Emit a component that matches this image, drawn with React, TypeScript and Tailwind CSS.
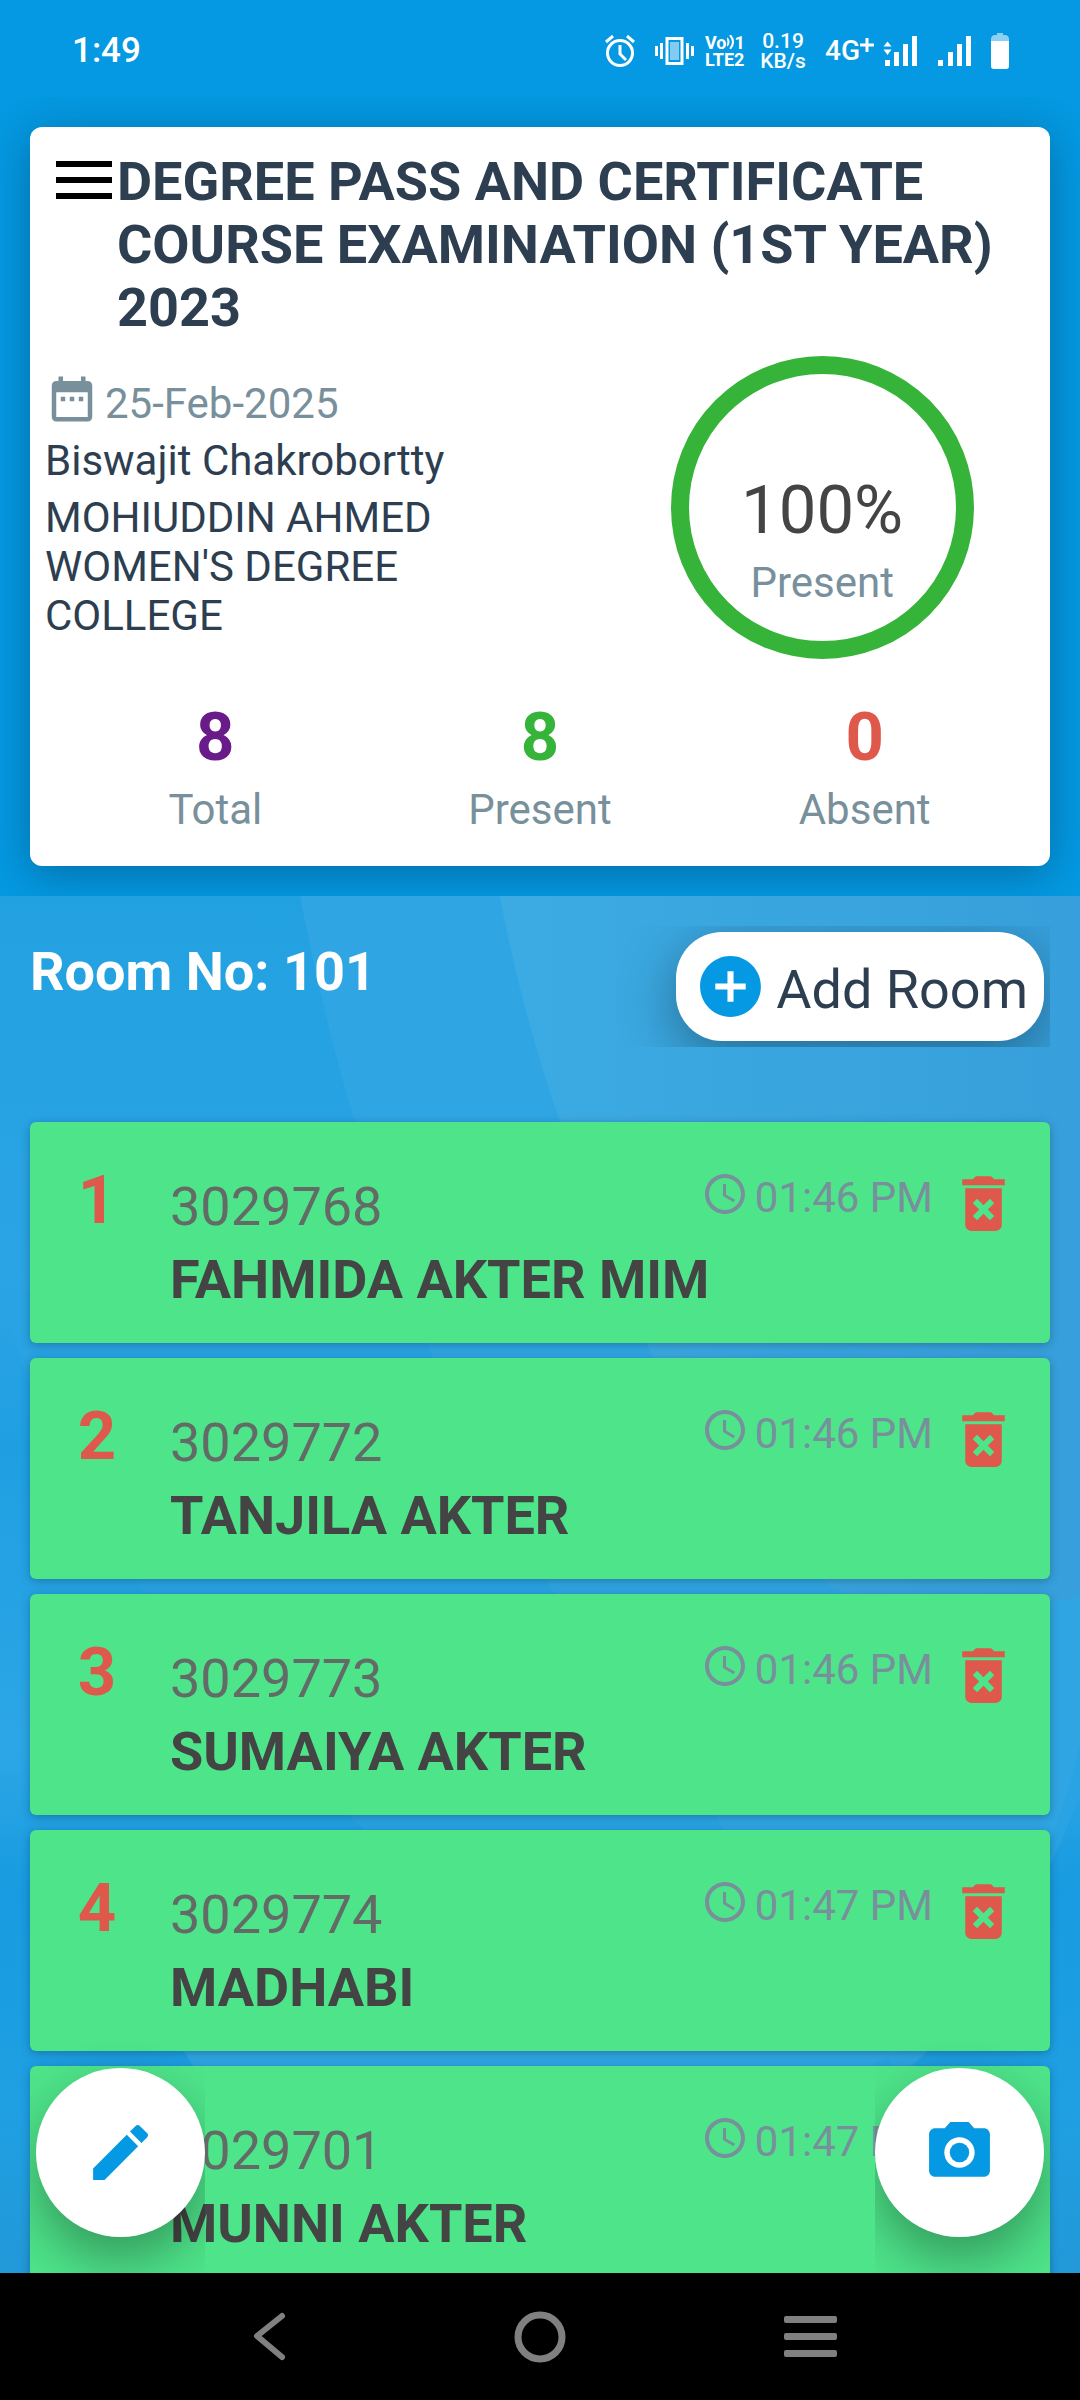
import React, { useState } from 'react';
import {
  MdAccessTime,
  MdAddCircle,
  MdDateRange,
  MdDeleteForever,
  MdEdit,
  MdPhotoCamera,
} from 'react-icons/md';

interface Examinee {
  roll: string;
  name: string;
  time: string;
}

const initialExaminees: Examinee[] = [
  { roll: '3029768', name: 'FAHMIDA AKTER MIM', time: '01:46 PM' },
  { roll: '3029772', name: 'TANJILA AKTER', time: '01:46 PM' },
  { roll: '3029773', name: 'SUMAIYA AKTER', time: '01:46 PM' },
  { roll: '3029774', name: 'MADHABI', time: '01:47 PM' },
  { roll: '3029701', name: 'MUNNI AKTER', time: '01:47 PM' },
];

const stats = [
  { label: 'Total', value: 8, color: 'text-[#6a1b8a]' },
  { label: 'Present', value: 8, color: 'text-[#35b439]' },
  { label: 'Absent', value: 0, color: 'text-[#de584b]' },
];

const StatusBar: React.FC = () => (
  <div className="h-[97px] shrink-0 flex items-center justify-between pl-[72px] pr-[71px] pt-1 text-white">
    <span className="text-[35px] leading-[42px] font-medium">1:49</span>
    <div className="flex items-center">
      <svg className="w-[30px] h-[32px]" viewBox="0 0 30 32" fill="none" stroke="currentColor">
        <circle cx="15" cy="18" r="12.5" strokeWidth="3" />
        <path d="M15 10v9l6 6" strokeWidth="3" />
        <path d="M1 7l7-6M29 7l-7-6" strokeWidth="3" />
      </svg>
      <svg className="w-[40px] h-[28px] ml-5" viewBox="0 0 40 28" fill="currentColor">
        <rect x="12" y="1.5" width="15" height="25" fill="none" stroke="currentColor" strokeWidth="3" />
        <rect x="15" y="5" width="9" height="18" opacity="0.5" />
        <rect x="0" y="9" width="3" height="10" />
        <rect x="5" y="6" width="3" height="16" />
        <rect x="31" y="6" width="3" height="16" />
        <rect x="36" y="9" width="3" height="10" />
      </svg>
      <div className="ml-[10px] w-[40px] text-[18px] leading-[17px] font-bold">
        <div className="flex items-center">
          Vo
          <svg className="w-[8px] h-[14px]" viewBox="0 0 8 14" fill="none" stroke="currentColor" strokeWidth="2">
            <path d="M0 3q3 4 0 8M3 0q6 7 0 14" />
          </svg>
          1
        </div>
        <div>LTE2</div>
      </div>
      <div className="ml-[15px] w-[46px] text-[21px] leading-5 font-medium text-center">
        <div>0.19</div>
        <div>KB/s</div>
      </div>
      <div className="flex items-center ml-[19px] w-[50px] text-[28px] leading-8 font-medium">
        4G
        <svg className="w-[14px] h-[14px] mb-3 shrink-0" viewBox="0 0 14 14" stroke="currentColor" strokeWidth="3">
          <path d="M7 0v14M0 7h14" />
        </svg>
      </div>
      <svg className="w-[36px] h-[30px] ml-2" viewBox="0 0 36 30" fill="currentColor">
        <path d="M4.500 5.500l4 5h-8zM4.500 19l4-5.500h-8z" />
        <rect x="2" y="24" width="5" height="6" />
        <rect x="11" y="16" width="5" height="14" />
        <rect x="20" y="8" width="5" height="22" />
        <rect x="29" y="0" width="5" height="30" />
      </svg>
      <svg className="w-[34px] h-[30px] ml-[19px]" viewBox="0 0 34 30" fill="currentColor">
        <rect x="0" y="24" width="5" height="6" />
        <rect x="10" y="16" width="5" height="14" />
        <rect x="19" y="8" width="5" height="22" />
        <rect x="28" y="0" width="5" height="30" />
      </svg>
      <svg className="w-[18px] h-[36px] ml-[19px]" viewBox="0 0 18 36" fill="currentColor">
        <path d="M6 0h6v2h3q3 1 3 4v2H0V6q0-3 3-4h3z" opacity="0.55" />
        <path d="M0 8h18v25q0 3-3 3H3q-3 0-3-3z" />
      </svg>
    </div>
  </div>
);

const Wallpaper: React.FC = () => (
  <svg
    className="absolute inset-0 w-full h-full"
    viewBox="0 0 1080 1377"
    preserveAspectRatio="none"
    aria-hidden="true"
  >
    <defs>
      <linearGradient id="base" x1="0" y1="0" x2="0" y2="1">
        <stop offset="0" stopColor="#22a1e1" />
        <stop offset="0.28" stopColor="#2ba4e5" />
        <stop offset="0.4" stopColor="#1f9fe2" />
        <stop offset="0.62" stopColor="#2ca6e6" />
        <stop offset="0.72" stopColor="#189be0" />
        <stop offset="0.88" stopColor="#1fa0e3" />
        <stop offset="1" stopColor="#2298d8" />
      </linearGradient>
      <linearGradient id="glow" x1="0" y1="0" x2="1" y2="0">
        <stop offset="0" stopColor="#3cabe3" />
        <stop offset="1" stopColor="#379fdb" />
      </linearGradient>
    </defs>
    <rect width="1080" height="1377" fill="url(#base)" />
    <path d="M0 400Q60 600 180 740T620 1180L900 1180Q1000 1100 1080 900V300z" fill="#29a3e3" />
    <path d="M300 0Q325 130 355 226T430 454T550 690T900 1180Q1020 1080 1080 850V0z" fill="#2fa5e3" />
    <path d="M500 0Q520 110 560 226T650 454T830 690Q940 740 1080 700V0z" fill="url(#glow)" />
    <path d="M180 1150H900L860 1180H200z" fill="#2fa5e3" />
  </svg>
);

const SummaryCard: React.FC = () => (
  <section className="bg-white rounded-[12px] px-[15px] pb-8 pt-[23px] shadow-[0_8px_44px_rgba(0,20,40,0.32)]">
    <div className="flex items-start gap-[5px] pl-[11px]">
      <button type="button" aria-label="Menu" className="pt-[11px] shrink-0">
        <svg className="w-[56px] h-[38px]" viewBox="0 0 56 38">
          <path d="M0 0h56v6H0zM0 16h56v6H0zM0 32h56v6H0z" />
        </svg>
      </button>
      <h1 className="text-[54px] leading-[63px] font-bold text-[#2c3e50]">
        DEGREE PASS AND CERTIFICATE COURSE EXAMINATION (1ST YEAR) 2023
      </h1>
    </div>

    <div className="flex mt-[17px]">
      <div className="w-[57%] pr-10 pt-4 flex flex-col gap-2 text-[42px] leading-[49px] text-[#2c3e50]">
        <div className="flex items-start gap-[6px] text-[#78909c]">
          <MdDateRange size={54} />
          <span className="pt-[7px]">25-Feb-2025</span>
        </div>
        <p>Biswajit Chakrobortty</p>
        <p>MOHIUDDIN AHMED WOMEN'S DEGREE COLLEGE</p>
      </div>
      <div className="flex-1 flex justify-center">
        <div className="w-[303px] h-[303px] rounded-full border-[18px] border-[#35b439] flex flex-col items-center gap-2 pt-[97px]">
          <span className="text-[67px] leading-[79px] text-[#444]">100%</span>
          <span className="text-[42px] leading-[49px] text-[#78909c]">Present</span>
        </div>
      </div>
    </div>

    <div className="grid grid-cols-3 mt-[39px] px-[8px]">
      {stats.map((stat) => (
        <div key={stat.label} className="flex flex-col items-center gap-2">
          <span className={`text-[67px] leading-[79px] font-bold ${stat.color}`}>
            {stat.value}
          </span>
          <span className="text-[42px] leading-[49px] text-[#78909c]">{stat.label}</span>
        </div>
      ))}
    </div>
  </section>
);

interface ExamineeCardProps {
  index: number;
  examinee: Examinee;
  onDelete: (roll: string) => void;
}

const ExamineeCard: React.FC<ExamineeCardProps> = ({ index, examinee, onDelete }) => (
  <li className="flex items-start bg-[#4ee48a] rounded-[6px] pr-[30px] pb-8 shadow-[0_2px_10px_rgba(0,0,0,0.25)]">
    <span className="w-[134px] shrink-0 pt-[39px] text-center text-[67px] leading-[79px] font-bold text-[#de584b]">
      {index}
    </span>
    <div className="flex-1 min-w-0 pl-[6px] pt-[53px] flex flex-col gap-[10px] text-[54px] leading-[63px]">
      <span className="text-[#636b67]">{examinee.roll}</span>
      <span className="font-bold text-[#444] whitespace-nowrap">{examinee.name}</span>
    </div>
    <div className="shrink-0 flex items-start pt-[45px] text-[#78909c]">
      <MdAccessTime size={48} className="mt-[3px]" />
      <span className="pl-[6px] pr-[14px] pt-[6px] text-[42px] leading-[49px] whitespace-nowrap">
        {examinee.time}
      </span>
      <button
        type="button"
        aria-label={`Delete ${examinee.name}`}
        onClick={() => onDelete(examinee.roll)}
        className="text-[#de584b]"
      >
        <MdDeleteForever size={73} />
      </button>
    </div>
  </li>
);

const NavBar: React.FC = () => (
  <nav className="h-[127px] shrink-0 bg-black text-[#808080] flex justify-center items-center">
    <button type="button" aria-label="Back" className="w-1/4 flex justify-center">
      <svg className="w-[52px] h-[52px]" viewBox="0 0 52 52" fill="none" stroke="currentColor" strokeWidth="6" strokeLinecap="round" strokeLinejoin="round">
        <path d="M38 5L13 25L38 46" />
      </svg>
    </button>
    <button type="button" aria-label="Home" className="w-1/4 flex justify-center">
      <svg className="w-[52px] h-[52px]" viewBox="0 0 52 52" fill="none" stroke="currentColor" strokeWidth="7">
        <circle cx="26" cy="26" r="22" />
      </svg>
    </button>
    <button type="button" aria-label="Recent apps" className="w-1/4 flex justify-center">
      <svg className="w-[53px] h-[42px]" viewBox="0 0 53 42" fill="currentColor">
        <rect y="0" width="53" height="7" rx="2" />
        <rect y="17" width="53" height="7" rx="2" />
        <rect y="34" width="53" height="7" rx="2" />
      </svg>
    </button>
  </nav>
);

const App: React.FC = () => {
  const [examinees, setExaminees] = useState(initialExaminees);

  const handleDelete = (roll: string) => {
    setExaminees(examinees.filter((e) => e.roll !== roll));
  };

  return (
    <div className="h-screen flex flex-col bg-[#0499e2] font-['Roboto',sans-serif]">
      <StatusBar />

      <header className="shrink-0 overflow-hidden px-[30px] py-[30px]">
        <SummaryCard />
      </header>

      <main className="relative flex-1 min-h-0 overflow-hidden">
        <Wallpaper />

        <div className="relative h-full flex flex-col">
          <div className="flex items-start justify-between px-[30px] pt-[30px] pb-[75px]">
            <h2 className="pt-[14px] text-[54px] leading-[63px] font-bold text-white">
              Room No: 101
            </h2>
            <div className="overflow-hidden p-[6px] pl-20">
              <button
                type="button"
                className="h-[109px] flex items-center gap-[9px] pl-[18px] pr-[16px] bg-white rounded-[46px] shadow-[0_16px_56px_rgba(0,0,0,0.35)]"
              >
                <MdAddCircle size={73} className="text-[#0499e2]" />
                <span className="pt-[6px] text-[54px] leading-[63px] text-[#2c3e50]">
                  Add Room
                </span>
              </button>
            </div>
          </div>

          <ul className="flex-1 min-h-0 px-[30px] flex flex-col gap-[15px]">
            {examinees.map((examinee, i) => (
              <ExamineeCard
                key={examinee.roll}
                index={i + 1}
                examinee={examinee}
                onDelete={handleDelete}
              />
            ))}
          </ul>
        </div>

        {/* Floating actions */}
        <div className="absolute inset-x-0 bottom-0 px-[30px] flex justify-between">
          <div className="overflow-hidden pl-[6px] pt-[30px] pb-9">
            <button
              type="button"
              aria-label="Enter manually"
              className="w-[169px] h-[169px] rounded-full bg-white text-[#0499e2] flex items-center justify-center shadow-[0_24px_52px_rgba(0,0,0,0.32)]"
            >
              <MdEdit size={73} />
            </button>
          </div>
          <div className="overflow-hidden pr-[6px] pt-[30px] pb-9">
            <button
              type="button"
              aria-label="Scan"
              className="w-[169px] h-[169px] rounded-full bg-white text-[#0499e2] flex items-center justify-center shadow-[0_24px_52px_rgba(0,0,0,0.32)]"
            >
              <MdPhotoCamera size={73} />
            </button>
          </div>
        </div>
      </main>

      <NavBar />
    </div>
  );
};

export default App;
